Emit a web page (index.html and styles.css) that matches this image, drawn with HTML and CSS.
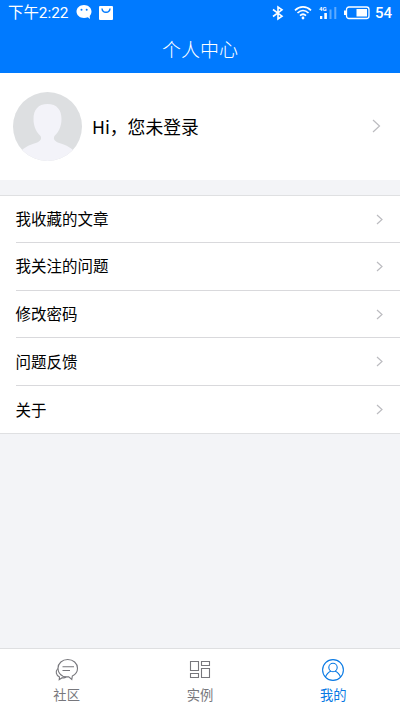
FILE: index.html
```html
<!DOCTYPE html>
<html lang="zh-CN">
<head>
<meta charset="utf-8">
<title>个人中心</title>
<link rel="stylesheet" href="styles.css">
</head>
<body>
<div class="app">
  <header class="header">
    <div class="status">
      <span class="time">下午2:22</span>
      <svg class="chat" width="17" height="15" viewBox="0 0 17 15"><path fill="#fff" d="M8 0C3.800 0 .500 2.900.500 6.500S3.800 13 8 13c1.400 0 2.700-.3 3.800-.8L14 14l-.3-3c1.100-1.200 1.800-2.700 1.800-4.500C15.500 2.900 12.200 0 8 0z"/><circle cx="5.500" cy="4.800" r="1" fill="#007aff"/><circle cx="10.700" cy="4.800" r="1" fill="#007aff"/></svg>
      <svg class="bag" width="14" height="14" viewBox="0 0 14 14"><rect width="14" height="14" rx="1" fill="#fff"/><path d="M3 2.500c.3 5 7.700 5 8 0" fill="none" stroke="#007aff" stroke-width="1.400"/></svg>
      <span class="spacer"></span>
      <svg class="bluetooth" width="12" height="16" viewBox="0 0 12 16"><path d="M1 4.500l9 6.700L6 14V2l4 2.800-9 6.700" fill="none" stroke="#fff" stroke-width="1.600"/></svg>
      <svg class="wifi" width="18" height="15" viewBox="0 0 18 15"><g fill="none" stroke="#fff" stroke-width="1.700"><path d="M1 5.300c4.700-4.500 11.300-4.500 16 0"/><path d="M3.500 8c3.300-3.100 7.700-3.100 11 0"/><path d="M6 10.600c1.900-1.700 4.100-1.700 6 0"/></g><circle cx="9" cy="13" r="1.400" fill="#fff"/></svg>
      <svg class="signal" width="18" height="14" viewBox="0 0 18 14"><text x="0" y="5" class="net">4G</text><path fill="#fff" d="M1 10h2.300v3H1zM5.300 7h2.600v6H5.300z"/><path fill="#5eabff" d="M10.500 3.500h2V13h-2zM15.300 1h2v12h-2z"/></svg>
      <svg class="battery" width="26" height="14" viewBox="0 0 26 14"><rect x="2.500" y="1" width="22.500" height="11.500" rx="2.500" fill="none" stroke="#fff" stroke-width="1.300"/><path fill="#fff" d="M0 4.500h2v4.500H0zM12.500 3h10.500v7.500H12.500z"/></svg>
      <span class="level">54</span>
    </div>
    <h1 class="title">个人中心</h1>
  </header>

  <section class="profile">
    <svg class="avatar" width="69" height="69" viewBox="0 0 69 69"><defs><clipPath id="face"><circle cx="34.500" cy="34.500" r="34.500"/></clipPath></defs><g clip-path="url(#face)"><path fill="#dddfe1" d="M0 0h69v69H0z"/><path fill="#f3f3f9" d="M34.500 12C25 12 20.500 18 20.500 27c0 8 3.300 13.500 7 17 1.700 3-.5 5.500-4 6.800C17 53 13 54.500 9 58v11h51V58c-4-3.500-8-5-14.500-7.200-3.500-1.300-5.700-3.800-4-6.800 3.700-3.500 7-9 7-17 0-9-4.500-15-14-15z"/></g></svg>
    <span class="name">Hi，您未登录</span>
    <svg class="arrow" width="9" height="14" viewBox="0 0 9 14"><path d="M1 1l6.500 6L1 13"/></svg>
  </section>

  <ul class="menu">
    <li class="item"><span>我收藏的文章</span><svg class="arrow" width="7" height="11" viewBox="0 0 7 11"><path d="M1 1l5 4.500L1 10"/></svg></li>
    <li class="item"><span>我关注的问题</span><svg class="arrow" width="7" height="11" viewBox="0 0 7 11"><path d="M1 1l5 4.500L1 10"/></svg></li>
    <li class="item"><span>修改密码</span><svg class="arrow" width="7" height="11" viewBox="0 0 7 11"><path d="M1 1l5 4.500L1 10"/></svg></li>
    <li class="item"><span>问题反馈</span><svg class="arrow" width="7" height="11" viewBox="0 0 7 11"><path d="M1 1l5 4.500L1 10"/></svg></li>
    <li class="item"><span>关于</span><svg class="arrow" width="7" height="11" viewBox="0 0 7 11"><path d="M1 1l5 4.500L1 10"/></svg></li>
  </ul>

  <nav class="tabs">
    <div class="tab">
      <svg width="24" height="24" viewBox="0 0 24 24"><path d="M8 18.300C4.800 16.600 3 13.600 3 10.300 3 5.200 7.300 1.500 12.700 1.500S22.500 5.200 22.500 10.300c0 3.500-2 6.300-5.200 7.800l-.5 3.400-3.100-2.700c-2 .2-4 .1-5.700-.5z"/><path d="M2.800 10.500C.300 13.500.8 17 4.500 19l-.3 2.700 3-2c1.500.3 2.800.1 4-.7M7.500 8.800h11.500M7.500 12.500h7.500"/></svg>
      <span>社区</span>
    </div>
    <div class="tab">
      <svg width="24" height="24" viewBox="0 0 24 24"><path d="M2.500 3.500h8v9h-8zM13.500 3.500h8v4h-8zM2.500 15.500h8v4h-8zM13.500 10.500h8v9h-8z"/></svg>
      <span>实例</span>
    </div>
    <div class="tab active">
      <svg width="24" height="24" viewBox="0 0 24 24"><circle cx="12" cy="12" r="10.400"/><circle cx="12" cy="9.500" r="4.200"/><path d="M4.500 19.200c1-3.300 3-5 5.500-6.200M19.500 19.200c-1-3.300-3-5-5.500-6.200"/></svg>
      <span>我的</span>
    </div>
  </nav>
</div>
</body>
</html>
```

FILE: styles.css
```css
* { box-sizing: border-box; }
body {
  margin: 0;
  font-family: Roboto, "Noto Sans CJK SC", sans-serif;
  color: #000;
  background: #f3f4f7;
}
svg { display: block; flex: none; }
.app { display: flex; flex-direction: column; height: 711px; overflow: hidden; }

.header { height: 73px; background: #007aff; color: #fff; }
.status { display: flex; align-items: center; height: 25px; padding: 0 8px; }
.time { width: 61px; font-size: 15.4px; line-height: 25px; white-space: nowrap; padding-top: 1px; }
.chat { margin-left: 7px; }
.bag { margin-left: 6px; }
.spacer { flex: 1; }
.wifi { margin-left: 10px; }
.signal { margin-left: 7px; }
.net { font: 700 6px Roboto, sans-serif; fill: #fff; }
.battery { margin-left: 7px; }
.level { margin-left: 5px; font-size: 15px; font-weight: 500; }
.title { margin: 0; padding-top: 1px; font-size: 19px; line-height: 50px; font-weight: 300; text-align: center; }

.profile { display: flex; align-items: center; height: 107px; padding: 0 19px 0 13px; background: #fff; }
.name { flex: 1; margin-left: 10px; padding-bottom: 2px; font-size: 17.8px; font-family: "Noto Sans CJK SC", sans-serif; }
.arrow { fill: none; stroke: #bcbcc0; stroke-width: 1.2; }
.profile .arrow { margin-bottom: 2px; }

.menu {
  margin: 15px 0 0;
  padding: 0 0 0 16px;
  list-style: none;
  background: #fff;
  border-top: 1px solid #dfe0e2;
  border-bottom: 1px solid #dfe0e2;
}
.item {
  display: flex;
  align-items: center;
  justify-content: space-between;
  height: 47.7px;
  padding-right: 17px;
  font-size: 15.5px;
  border-bottom: 1px solid #d9d9dc;
}
.item span { margin: -2px 0 0 -0.5px; }
.item:first-child { height: 47px; }
.item:last-child { height: 47.2px; border-bottom: 0; }

.tabs {
  display: flex;
  height: 63px;
  margin-top: auto;
  background: #fff;
  border-top: 1px solid #dedfe1;
}
.tab {
  flex: 1;
  display: flex;
  flex-direction: column;
  align-items: center;
  padding-top: 9px;
  color: #77777c;
  font-size: 13.3px;
  line-height: 20px;
}
.tab svg { fill: none; stroke: currentColor; stroke-width: 1.1; margin-bottom: 4px; }
.tab.active { color: #0879e4; }
```
